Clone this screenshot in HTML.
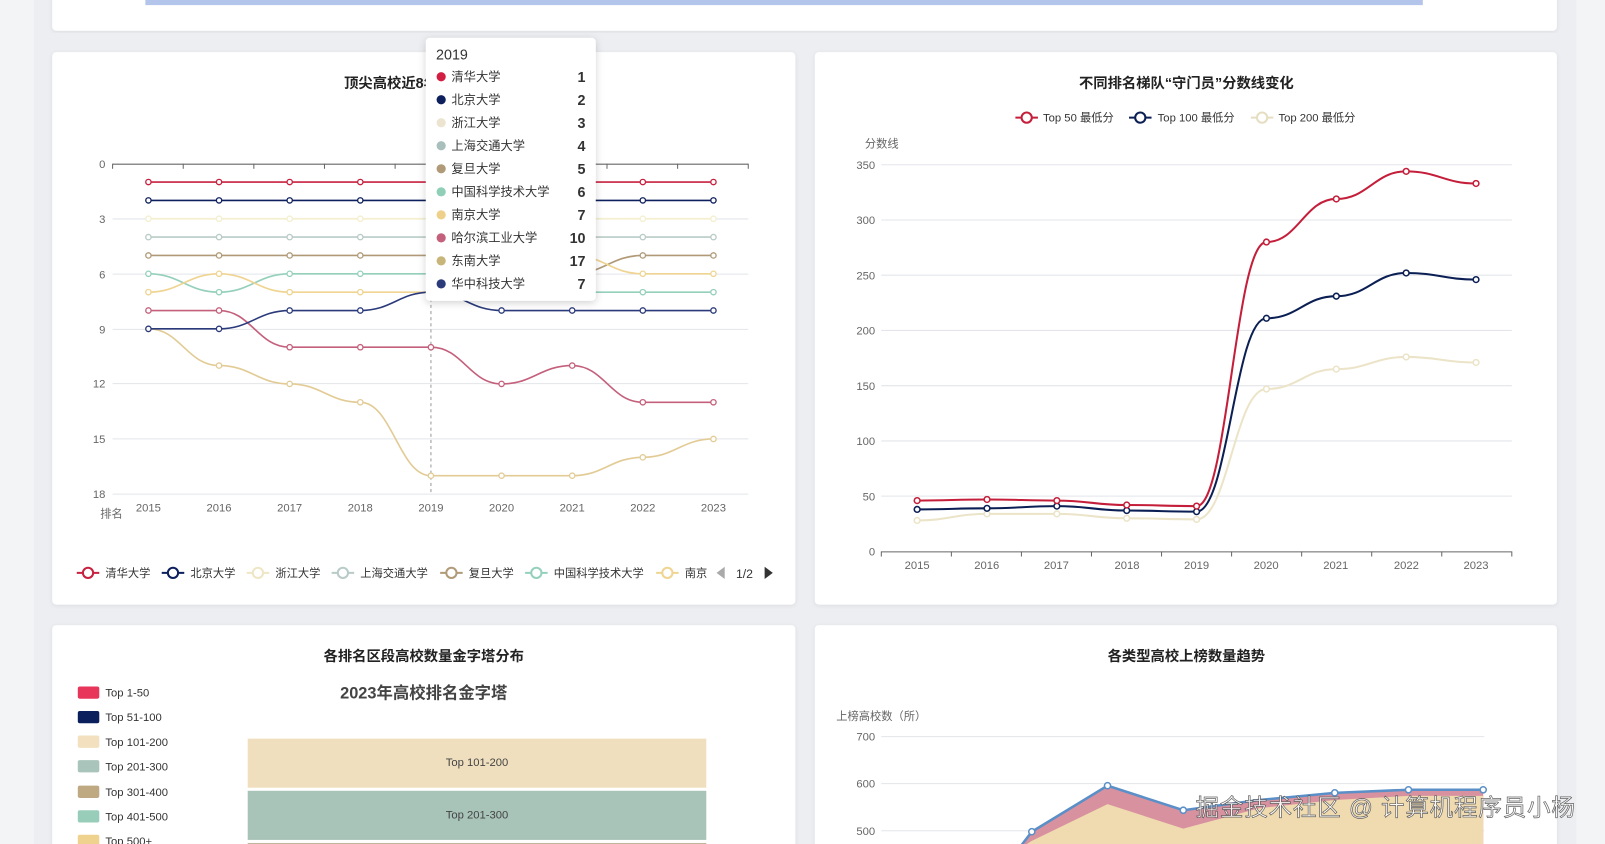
<!DOCTYPE html>
<html><head><meta charset="utf-8"><style>
html,body{margin:0;padding:0;width:1605px;height:844px;overflow:hidden;background:#eceef2}
svg{display:block}
text{font-family:"Liberation Sans","Noto Sans CJK SC",sans-serif}
</style></head><body>
<svg id="s" width="1605" height="844" viewBox="0 0 1568 825" preserveAspectRatio="none" xmlns="http://www.w3.org/2000/svg">
<defs>
<filter id="sh" x="-5%" y="-5%" width="110%" height="110%"><feDropShadow dx="0" dy="1" stdDeviation="2" flood-color="#000" flood-opacity="0.08"/></filter>
<filter id="sh2" x="-10%" y="-10%" width="120%" height="120%"><feDropShadow dx="0" dy="2" stdDeviation="4" flood-color="#000" flood-opacity="0.18"/></filter>
</defs>
<rect x="0" y="0" width="1568" height="825" fill="#eceef2"/>
<rect x="0" y="0" width="33" height="825" fill="#f3f4f6"/>
<rect x="1540" y="0" width="28" height="825" fill="#f3f4f6"/>
<rect x="51" y="-10" width="1470" height="40" rx="4" fill="#fff" filter="url(#sh)"/>
<rect x="142" y="0" width="1248" height="5" fill="#b3c5ea"/>
<rect x="51" y="51" width="726" height="540" rx="4" fill="#fff" filter="url(#sh)"/>
<rect x="796" y="51" width="725" height="540" rx="4" fill="#fff" filter="url(#sh)"/>
<rect x="51" y="611" width="726" height="230" rx="4" fill="#fff" filter="url(#sh)"/>
<rect x="796" y="611" width="725" height="230" rx="4" fill="#fff" filter="url(#sh)"/>

<text x="410" y="86" font-size="14" font-weight="bold" fill="#222" text-anchor="middle">顶尖高校近8年排名变化</text>
<g stroke="#e3e5ea" stroke-width="1">
<line x1="110" y1="214" x2="731" y2="214"/><line x1="110" y1="268" x2="731" y2="268"/><line x1="110" y1="322" x2="731" y2="322"/><line x1="110" y1="375" x2="731" y2="375"/><line x1="110" y1="429" x2="731" y2="429"/><line x1="110" y1="483" x2="731" y2="483"/>
</g>
<line x1="110" y1="160.5" x2="731" y2="160.5" stroke="#666" stroke-width="1"/>
<g id="c1ticks" stroke="#666"></g>
<g font-size="11" fill="#666" text-anchor="end">
<text x="103" y="164">0</text><text x="103" y="218">3</text><text x="103" y="272">6</text><text x="103" y="326">9</text><text x="103" y="379">12</text><text x="103" y="433">15</text><text x="103" y="487">18</text>
</g>
<text x="98" y="506" font-size="11" fill="#666">排名</text>
<g font-size="11" fill="#666" text-anchor="middle">
<text x="145" y="500">2015</text><text x="214" y="500">2016</text><text x="283" y="500">2017</text><text x="352" y="500">2018</text><text x="421" y="500">2019</text><text x="490" y="500">2020</text><text x="559" y="500">2021</text><text x="628" y="500">2022</text><text x="697" y="500">2023</text>
</g>
<line x1="421" y1="160" x2="421" y2="483" stroke="#999" stroke-dasharray="3,3"/>
<g id="c1"></g>
<g id="leg1"></g>
<g font-size="11" fill="#333">
<text x="103" y="564">清华大学</text><text x="186" y="564">北京大学</text><text x="269" y="564">浙江大学</text><text x="352" y="564">上海交通大学</text><text x="458" y="564">复旦大学</text><text x="541" y="564">中国科学技术大学</text><text x="669" y="564">南京</text>
<text x="719" y="565" font-size="12">1/2</text>
</g>
<path d="M700 560 L708 554 L708 566 Z" fill="#aaa"/>
<path d="M755 560 L747 554 L747 566 Z" fill="#333"/>

<rect x="416" y="37" width="166" height="257" rx="4" fill="#fff" filter="url(#sh2)"/>
<text x="426" y="58" font-size="14" fill="#333">2019</text>
<g id="tt" font-size="12" fill="#333"></g>

<text x="1159" y="86" font-size="14" font-weight="bold" fill="#222" text-anchor="middle">不同排名梯队“守门员”分数线变化</text>
<g id="leg2"></g>
<g font-size="11" fill="#333"><text x="1019" y="119">Top 50 最低分</text><text x="1131" y="119">Top 100 最低分</text><text x="1249" y="119">Top 200 最低分</text></g>
<text x="845" y="144" font-size="11" fill="#666">分数线</text>
<g stroke="#e3e5ea">
<line x1="861" y1="161" x2="1477" y2="161"/><line x1="861" y1="215" x2="1477" y2="215"/><line x1="861" y1="269" x2="1477" y2="269"/><line x1="861" y1="323" x2="1477" y2="323"/><line x1="861" y1="377" x2="1477" y2="377"/><line x1="861" y1="431" x2="1477" y2="431"/><line x1="861" y1="485" x2="1477" y2="485"/>
</g>
<line x1="861" y1="539.5" x2="1477" y2="539.5" stroke="#666"/>
<g id="c2ticks" stroke="#666"></g>
<g font-size="11" fill="#666" text-anchor="end">
<text x="855" y="165">350</text><text x="855" y="219">300</text><text x="855" y="273">250</text><text x="855" y="327">200</text><text x="855" y="381">150</text><text x="855" y="435">100</text><text x="855" y="489">50</text><text x="855" y="543">0</text>
</g>
<g font-size="11" fill="#666" text-anchor="middle">
<text x="896" y="556">2015</text><text x="964" y="556">2016</text><text x="1032" y="556">2017</text><text x="1101" y="556">2018</text><text x="1169" y="556">2019</text><text x="1237" y="556">2020</text><text x="1305" y="556">2021</text><text x="1374" y="556">2022</text><text x="1442" y="556">2023</text>
</g>
<g id="c2"></g>

<text x="414" y="646" font-size="14" font-weight="bold" fill="#222" text-anchor="middle">各排名区段高校数量金字塔分布</text>
<g>
<rect x="76" y="671" width="21" height="12" rx="2" fill="#e8365a"/><rect x="76" y="695" width="21" height="12" rx="2" fill="#0b1f5c"/><rect x="76" y="719" width="21" height="12" rx="2" fill="#f2e0bf"/><rect x="76" y="743" width="21" height="12" rx="2" fill="#a9c4bb"/><rect x="76" y="768" width="21" height="12" rx="2" fill="#bfa983"/><rect x="76" y="792" width="21" height="12" rx="2" fill="#98cdb9"/><rect x="76" y="816" width="21" height="12" rx="2" fill="#f0d28f"/>
</g>
<g font-size="11" fill="#333">
<text x="103" y="681">Top 1-50</text><text x="103" y="705">Top 51-100</text><text x="103" y="729">Top 101-200</text><text x="103" y="753">Top 201-300</text><text x="103" y="778">Top 301-400</text><text x="103" y="802">Top 401-500</text><text x="103" y="826">Top 500+</text>
</g>
<text x="414" y="683" font-size="16" font-weight="bold" fill="#444" text-anchor="middle">2023年高校排名金字塔</text>
<rect x="242" y="722" width="448" height="48" fill="#f0dfbe"/>
<rect x="242" y="773" width="448" height="48" fill="#a8c3b8"/>
<rect x="242" y="824" width="448" height="10" fill="#c0b49a"/>
<text x="466" y="749" font-size="11" fill="#444" text-anchor="middle">Top 101-200</text>
<text x="466" y="800" font-size="11" fill="#444" text-anchor="middle">Top 201-300</text>

<text x="1159" y="646" font-size="14" font-weight="bold" fill="#222" text-anchor="middle">各类型高校上榜数量趋势</text>
<text x="817" y="704" font-size="11" fill="#666">上榜高校数（所）</text>
<g stroke="#e3e5ea"><line x1="861" y1="720" x2="1450" y2="720"/><line x1="861" y1="766" x2="1450" y2="766"/><line x1="861" y1="812" x2="1450" y2="812"/></g>
<g font-size="11" fill="#666" text-anchor="end"><text x="855" y="724">700</text><text x="855" y="770">600</text><text x="855" y="816">500</text></g>
<path d="M995 830 L1008 813 L1082 768 L1156 792 L1230 782 L1304 775 L1376 772 L1449 772 L1449 830 Z" fill="#d8919f"/>
<path d="M995 830 L1008 822 L1082 786 L1156 810 L1230 790 L1304 782 L1376 778 L1449 778 L1449 830 Z" fill="#f0dab0"/>
<polyline points="995,830 1008,813 1082,768 1156,792 1230,782 1304,775 1376,772 1449,772" fill="none" stroke="#5b8fc7" stroke-width="2.5"/>
<g fill="#fff" stroke="#5b8fc7" stroke-width="1.5"><circle cx="1008" cy="813" r="3"/><circle cx="1082" cy="768" r="3"/><circle cx="1156" cy="792" r="3"/><circle cx="1304" cy="775" r="3"/><circle cx="1376" cy="772" r="3"/><circle cx="1449" cy="772" r="3"/></g>
<text x="1168" y="797" font-size="23" letter-spacing="0.8" fill="#fff" stroke="#555" stroke-width="0.7" opacity="0.9">掘金技术社区 @ 计算机程序员小杨</text>
</svg>
<script>
var NS="http://www.w3.org/2000/svg";
function el(p,t,a){var e=document.createElementNS(NS,t);for(var k in a)e.setAttribute(k,a[k]);p.appendChild(e);return e;}
function sp(pts){var d="M"+pts[0][0]+" "+pts[0][1];for(var i=1;i<pts.length;i++){var a=pts[i-1],b=pts[i],dx=b[0]-a[0];d+=" C"+(a[0]+dx*0.45)+" "+a[1]+" "+(b[0]-dx*0.45)+" "+b[1]+" "+b[0]+" "+b[1];}return d;}
var c1=document.getElementById("c1");
var ser=[
["#c8203f",[1,1,1,1,1,1,1,1,1]],
["#0d1f5c",[2,2,2,2,2,2,2,2,2]],
["#f3efcf",[3,3,3,3,3,3,3,3,3]],
["#b9cbc7",[4,4,4,4,4,4,4,4,4]],
["#b09a78",[5,5,5,5,5,6,6,5,5]],
["#95d0bb",[6,7,6,6,6,7,7,7,7]],
["#efd492",[7,6,7,7,7,6,5,6,6]],
["#c4607c",[8,8,10,10,10,12,11,13,13]],
["#e2cb95",[9,11,12,13,17,17,17,16,15]],
["#2b3a7a",[9,9,8,8,7,8,8,8,8]]];
ser.forEach(function(s){var pts=s[1].map(function(v,i){return[145+69*i,160+v*17.94];});
el(c1,"path",{d:sp(pts),fill:"none",stroke:s[0],"stroke-width":1.6});
pts.forEach(function(p){el(c1,"circle",{cx:p[0],cy:p[1],r:2.6,fill:"#fff",stroke:s[0],"stroke-width":1.3});});});
var t1=document.getElementById("c1ticks");for(var i=0;i<=9;i++){var x=110+69*i;el(t1,"line",{x1:x,y1:160,x2:x,y2:165});}
var lg=document.getElementById("leg1");
[[75,"#c8203f"],[158,"#0d1f5c"],[241,"#eee6c4"],[324,"#b9cbc7"],[430,"#b09a78"],[513,"#95d0bb"],[641,"#efd492"]].forEach(function(a){
el(lg,"line",{x1:a[0],y1:560,x2:a[0]+22,y2:560,stroke:a[1],"stroke-width":2});el(lg,"circle",{cx:a[0]+11,cy:560,r:5,fill:"#fff",stroke:a[1],"stroke-width":2});});
var tt=document.getElementById("tt");
var rows=[["清华大学","1","#d21e42"],["北京大学","2","#0d1f5c"],["浙江大学","3","#ece4d0"],["上海交通大学","4","#a9bfbb"],["复旦大学","5","#b09a78"],["中国科学技术大学","6","#8fcfb8"],["南京大学","7","#efd08a"],["哈尔滨工业大学","10","#c4607c"],["东南大学","17","#c8b57a"],["华中科技大学","7","#2b3a7a"]];
rows.forEach(function(r,i){var y=75+22.5*i;el(tt,"circle",{cx:431,cy:y,r:4.5,fill:r[2]});
var a=el(tt,"text",{x:441,y:y+4});a.textContent=r[0];
var b=el(tt,"text",{x:572,y:y+5,"text-anchor":"end","font-weight":"bold","font-size":"14"});b.textContent=r[1];});
var c2=document.getElementById("c2");
var s2=[["#ece4c8",[28,34,34,30,29,147,165,176,171]],["#0b1f54",[38,39,41,37,36,211,231,252,246]],["#c41e3a",[46,47,46,42,41,280,319,344,333]]];
s2.forEach(function(s){var pts=s[1].map(function(v,i){return[896+68.25*i,539-v*1.08];});
el(c2,"path",{d:sp(pts),fill:"none",stroke:s[0],"stroke-width":2});
pts.forEach(function(p){el(c2,"circle",{cx:p[0],cy:p[1],r:2.8,fill:"#fff",stroke:s[0],"stroke-width":1.5});});});
var t2=document.getElementById("c2ticks");for(var i=0;i<=9;i++){var x=861+68.44*i;el(t2,"line",{x1:x,y1:539,x2:x,y2:544});}
var l2=document.getElementById("leg2");
[[992,"#c41e3a"],[1103,"#0b1f54"],[1222,"#e6dec2"]].forEach(function(a){
el(l2,"line",{x1:a[0],y1:115,x2:a[0]+22,y2:115,stroke:a[1],"stroke-width":2});el(l2,"circle",{cx:a[0]+11,cy:115,r:5,fill:"#fff",stroke:a[1],"stroke-width":2});});
</script>
</body></html>
